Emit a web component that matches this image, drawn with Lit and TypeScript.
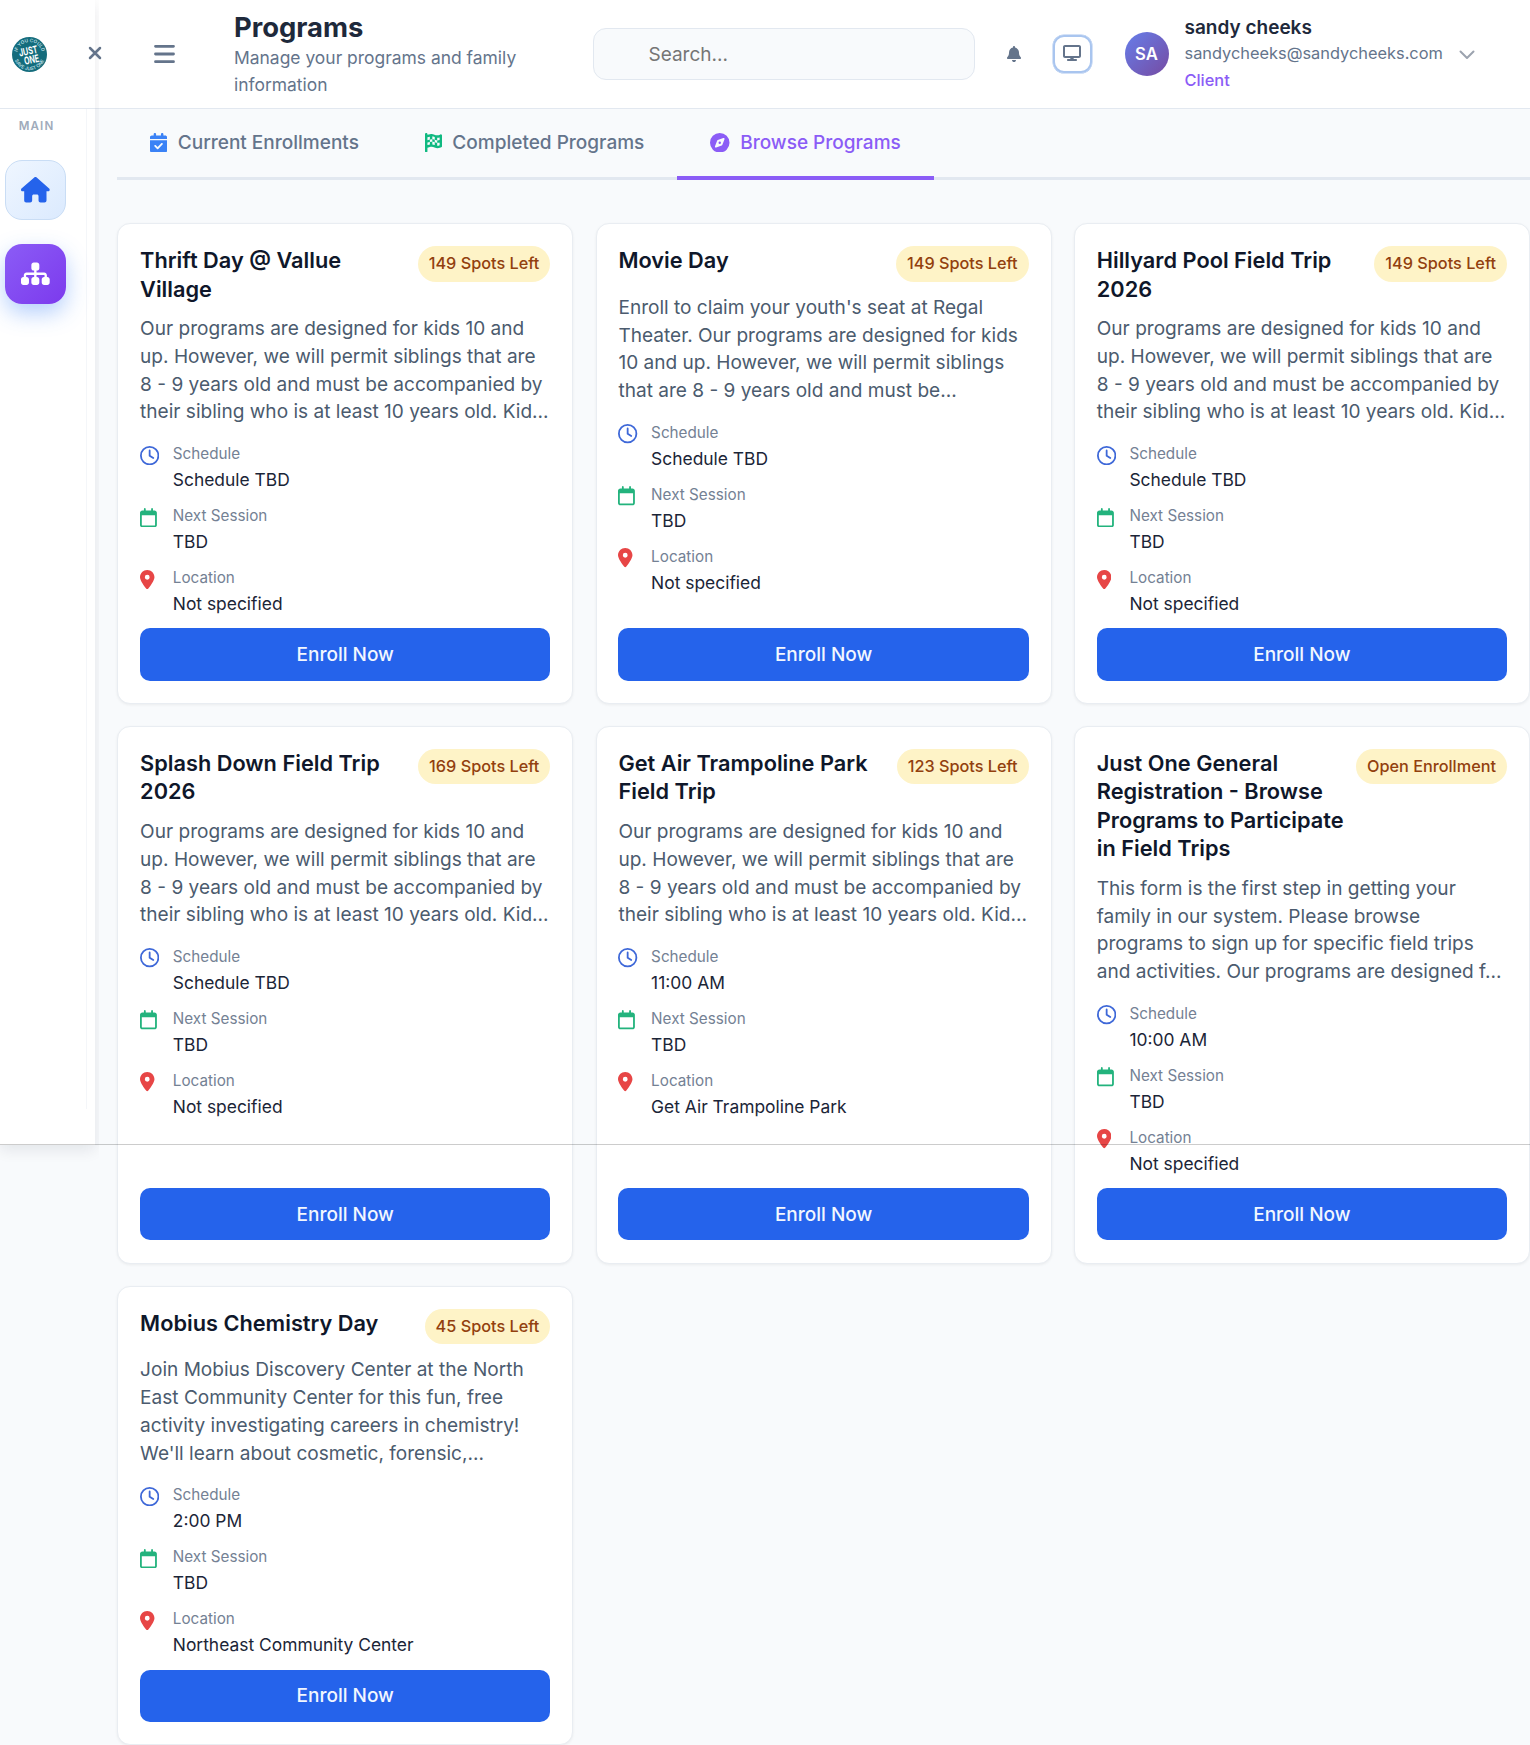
import { LitElement, html, css, svg, nothing } from "lit";
import { customElement, property } from "lit/decorators.js";

interface Glyph { w: number; d: string }

const GLYPHS: Record<string, Glyph> = {
  house: { w: 576, d: "M575.8 255.5c0 18-15 32.1-32 32.1h-32l.7 160.2c0 2.7-.2 5.4-.5 8.1V472c0 22.1-17.9 40-40 40H456c-1.1 0-2.2 0-3.3-.1c-1.4 .1-2.8 .1-4.2 .1H416 392c-22.1 0-40-17.9-40-40V448 384c0-17.7-14.3-32-32-32H256c-17.7 0-32 14.3-32 32v64 24c0 22.1-17.9 40-40 40H160 128.1c-1.5 0-3-.1-4.5-.2c-1.2 .1-2.4 .2-3.6 .2H104c-22.1 0-40-17.9-40-40V360c0-.9 0-1.9 .1-2.8V287.6H32c-18 0-32-14-32-32.1c0-9 3-17 10-24L266.4 8c7-7 15-8 22-8s15 2 21 7L564.8 231.5c8 7 12 15 11 24z" },
  sitemap: { w: 576, d: "M208 80c0-26.5 21.5-48 48-48h64c26.5 0 48 21.5 48 48v64c0 26.5-21.5 48-48 48h-8v40H464c30.9 0 56 25.1 56 56v32h8c26.5 0 48 21.5 48 48v64c0 26.5-21.5 48-48 48H464c-26.5 0-48-21.5-48-48V368c0-26.5 21.5-48 48-48h8V288c0-4.4-3.6-8-8-8H312v40h8c26.5 0 48 21.5 48 48v64c0 26.5-21.5 48-48 48H256c-26.5 0-48-21.5-48-48V368c0-26.5 21.5-48 48-48h8V280H112c-4.4 0-8 3.6-8 8v32h8c26.5 0 48 21.5 48 48v64c0 26.5-21.5 48-48 48H48c-26.5 0-48-21.5-48-48V368c0-26.5 21.5-48 48-48h8V288c0-30.9 25.1-56 56-56H264V192h-8c-26.5 0-48-21.5-48-48V80z" },
  check: { w: 448, d: "M128 0c17.7 0 32 14.3 32 32V64H288V32c0-17.7 14.3-32 32-32s32 14.3 32 32V64h48c26.5 0 48 21.5 48 48v48H0V112C0 85.5 21.5 64 48 64H96V32c0-17.7 14.3-32 32-32zM0 192H448V464c0 26.5-21.5 48-48 48H48c-26.5 0-48-21.5-48-48V192zM329 305c9.4-9.4 9.4-24.6 0-33.9s-24.6-9.4-33.9 0l-95 95-47-47c-9.4-9.4-24.6-9.4-33.9 0s-9.4 24.6 0 33.9l64 64c9.4 9.4 24.6 9.4 33.9 0L329 305z" },
  flag: { w: 448, d: "M32 0C49.700 0 64 14.300 64 32V48l69-17.200c38.100-9.500 78.300-5.100 113.500 12.500 46.300 23.200 100.800 23.200 147.100 0l9.600-4.800C423.800 28.100 448 43.100 448 66.100V345.800c0 13.300-8.300 25.300-20.800 30l-34.700 13c-46.200 17.300-97.600 14.600-141.700-7.400-37.900-19-81.400-23.700-122.500-13.400L64 384v96c0 17.700-14.300 32-32 32S0 497.700 0 480V32C0 14.300 14.300 0 32 0zM64 187.100l64-13.900v65.500L64 252.600V318l48.800-12.200c5.100-1.300 10.100-2.400 15.200-3.300v-63.900l38.900-8.400c8.300-1.800 16.700-2.500 25.100-2.100v-64c13.600.4 27.200 2.600 40.400 6.400l23.600 6.900v66.700l-41.700-12.300c-7.300-2.100-14.800-3.400-22.300-3.800v71.400c21.800 1.900 43.300 6.700 64 14.400V244.200l22.700 6.700c13.500 4 27.300 6.400 41.300 7.400V194c-7.800-.8-15.600-2.300-23.200-4.500L256 177.400V106.900c-14-3.500-27.500-8.500-40.400-15-7.600-3.800-15.500-6.600-23.600-8.600v81.100c-12.900-.3-25.800.9-38.500 3.700L128 173.600V98L64 113.900v73.200zM320 335.700c16.800 1.500 33.900-.7 50-6.800l14-5.200V251.900l-7.900 1.800c-18.400 4.300-37.300 5.700-56.100 4.500v77.400zM384 181.400V116.600c-20.900 6.100-42.400 9.100-64 9.100V194c13.900 1.400 28 .5 41.700-2.600l22.300-5.200z" },
  compass: { w: 512, d: "M256 512A256 256 0 1 0 256 0a256 256 0 1 0 0 512zm50.7-186.9L162.4 380.6c-19.4 7.5-38.5-11.6-31-31l55.5-144.3c3.3-8.5 9.9-15.1 18.4-18.4l144.3-55.5c19.4-7.5 38.5 11.6 31 31L325.1 306.7c-3.2 8.5-9.9 15.1-18.4 18.4zM288 256a32 32 0 1 0-64 0 32 32 0 1 0 64 0z" },
  pin: { w: 384, d: "M215.7 499.2C267 435 384 279.4 384 192C384 86 298 0 192 0S0 86 0 192c0 87.4 117 243 168.3 307.2c12.3 15.3 35.1 15.3 47.4 0zM192 128a64 64 0 1 1 0 128 64 64 0 1 1 0-128z" },
  clock: { w: 512, d: "M464 256A208 208 0 1 1 48 256a208 208 0 1 1 416 0zM0 256a256 256 0 1 0 512 0A256 256 0 1 0 0 256zM232 120V256c0 8 4 15.5 10.7 20l96 64c11 7.4 25.9 4.4 33.3-6.7s4.4-25.9-6.7-33.3L280 243.2V120c0-13.3-10.7-24-24-24s-24 10.7-24 24z" },
  calendar: { w: 448, d: "M152 24c0-13.3-10.7-24-24-24s-24 10.7-24 24V64H64C28.7 64 0 92.7 0 128v16 48V448c0 35.3 28.7 64 64 64H384c35.3 0 64-28.7 64-64V192 144 128c0-35.3-28.7-64-64-64H344V24c0-13.3-10.7-24-24-24s-24 10.7-24 24V64H152V24zM48 192H400V448c0 8.8-7.2 16-16 16H64c-8.8 0-16-7.2-16-16V192z" },
  bell: { w: 448, d: "M224 0c-17.7 0-32 14.3-32 32V51.2C119 66 64 130.6 64 208v18.8c0 47-17.3 92.4-48.5 127.6l-7.4 8.3c-8.4 9.4-10.4 22.9-5.3 34.4S19.4 416 32 416H416c12.6 0 24-7.4 29.2-18.9s3.1-25-5.3-34.4l-7.4-8.3C401.3 319.2 384 273.9 384 226.8V208c0-77.4-55-142-128-156.8V32c0-17.7-14.3-32-32-32zm45.3 493.3c12-12 18.7-28.3 18.7-45.3H224 160c0 17 6.7 33.3 18.7 45.3s28.3 18.7 45.3 18.7s33.3-6.7 45.3-18.7z" },
  desktop: { w: 576, d: "M64 0C28.700 0 0 28.700 0 64V352c0 35.300 28.700 64 64 64H240l-10.700 32H160c-17.700 0-32 14.300-32 32s14.300 32 32 32H416c17.700 0 32-14.300 32-32s-14.300-32-32-32H346.700L336 416H512c35.300 0 64-28.700 64-64V64c0-35.300-28.700-64-64-64H64zM512 64V352H64V64H512z" },
};

function glyph(name: string, height: number) {
  const g = GLYPHS[name];
  return html`<svg class="glyph" height=${height} width=${(height * g.w) / 512} viewBox="0 0 ${g.w} 512" fill="currentColor" fill-rule="${name === "flag" ? "evenodd" : "nonzero"}">${svg`<path d=${g.d}></path>`}</svg>`;
}

interface Program {
  title: string; badge: string; text: string; schedule: string; location: string;
}

const COMMON =
  "Our programs are designed for kids 10 and up. However, we will permit siblings that are 8 - 9 years old and must be accompanied by their sibling who is at least 10 years old. Kid...";

const PROGRAMS: Program[] = [
  { title: "Thrift Day @ Vallue Village", badge: "149 Spots Left", text: COMMON, schedule: "Schedule TBD", location: "Not specified" },
  { title: "Movie Day", badge: "149 Spots Left", text: "Enroll to claim your youth's seat at Regal Theater. Our programs are designed for kids 10 and up. However, we will permit siblings that are 8 - 9 years old and must be...", schedule: "Schedule TBD", location: "Not specified" },
  { title: "Hillyard Pool Field Trip 2026", badge: "149 Spots Left", text: COMMON, schedule: "Schedule TBD", location: "Not specified" },
  { title: "Splash Down Field Trip 2026", badge: "169 Spots Left", text: COMMON, schedule: "Schedule TBD", location: "Not specified" },
  { title: "Get Air Trampoline Park Field Trip", badge: "123 Spots Left", text: COMMON, schedule: "11:00 AM", location: "Get Air Trampoline Park" },
  { title: "Just One General Registration - Browse Programs to Participate in Field Trips", badge: "Open Enrollment", text: "This form is the first step in getting your family in our system. Please browse programs to sign up for specific field trips and activities. Our programs are designed f...", schedule: "10:00 AM", location: "Not specified" },
  { title: "Mobius Chemistry Day", badge: "45 Spots Left", text: "Join Mobius Discovery Center at the North East Community Center for this fun, free activity investigating careers in chemistry! We'll learn about cosmetic, forensic,...", schedule: "2:00 PM", location: "Northeast Community Center" },
];

@customElement("program-card")
export class ProgramCard extends LitElement {
  @property({ attribute: false }) program!: Program;

  static styles = css`
    :host { display: flex; flex-direction: column; box-sizing: border-box; min-width: 0; padding: 21.8px 22px 22.2px 21.8px; background: #fff; border: 1px solid #e9edf2; border-radius: 13px; box-shadow: 0 1px 3px rgba(0, 0, 0, 0.06); }
    .head { display: flex; justify-content: space-between; align-items: flex-start; gap: 10px; margin-bottom: 12.3px; }
    .title { margin: 0; font-size: 21.75px; line-height: 28.4px; font-weight: 600; color: #0f172a; min-width: 0; }
    .badge { flex: none; box-sizing: border-box; height: 35.5px; line-height: 35.5px; padding: 0 11px; border-radius: 18px; background: #fef3c7; color: #92400e; font-size: 16.25px; font-weight: 500; white-space: nowrap; }
    .text { margin: 0 0 15px; font-size: 19.07px; line-height: 27.7px; color: #4b5b6e; }
    .row { display: flex; align-items: flex-start; gap: 0; margin-bottom: 10px; }
    .icon { width: 32.7px; flex: none; padding-top: 4.5px; display: flex; }
    .clock { color: #3e68d8; }
    .calendar { color: #23b37d; }
    .pin { color: #e74646; }
    .label { font-size: 15.25px; line-height: 25px; color: #748194; }
    .value { font-size: 17.42px; line-height: 27px; color: #1b2537; }
    .enroll { margin-top: auto; height: 52.3px; border: 0; border-radius: 10px; background: #2563eb; color: #f2f7ff; font: 500 19px Inter, sans-serif; padding: 0; }
    .gap { height: 1.3px; flex: none; }
  `;

  private row(icon: string, label: string, value: string) {
    return html`<div class="row">
      <span class="icon ${icon}">${glyph(icon, 19.3)}</span>
      <div><div class="label">${label}</div><div class="value">${value}</div></div>
    </div>`;
  }

  render() {
    const p = this.program;
    if (!p) return nothing;
    return html`
      <div class="head"><h3 class="title">${p.title}</h3><span class="badge">${p.badge}</span></div>
      <p class="text">${p.text}</p>
      ${this.row("clock", "Schedule", p.schedule)}
      ${this.row("calendar", "Next Session", "TBD")}
      ${this.row("pin", "Location", p.location)}
      <div class="gap"></div>
      <button class="enroll">Enroll Now</button>
    `;
  }
}

@customElement("app-root")
export class AppRoot extends LitElement {
  static styles = css`
    :host { display: block; position: relative; width: 1530px; height: 1745px; overflow: hidden; background: #f8fafc; font-family: Inter, sans-serif; }
    * { box-sizing: border-box; }
    .layout { display: flex; align-items: flex-start; }
    .side { position: relative; z-index: 2; width: 95px; flex: none; height: 1144.5px; background: #fff; box-shadow: 0 5px 14px rgba(15, 23, 42, 0.09); clip-path: inset(0 -4px -24px 0); }
    .brand { height: 108.5px; border-bottom: 1px solid #e2e8f0; display: flex; align-items: center; padding-left: 12px; }
    .logo { display: block; margin-top: 2px; }
    .close { position: absolute; left: 88px; top: 46px; color: #64748b; z-index: 3; }
    .nav { width: 87px; height: 1000px; border-right: 1px solid #f4f6f9; padding: 9px 0 0 5px; }
    .section { width: 63px; text-align: center; font-size: 11.6px; line-height: 17px; font-weight: 600; letter-spacing: 1.15px; color: #a0abbb; margin-bottom: 25.5px; }
    .item { width: 60.5px; height: 60px; border-radius: 17px; display: flex; align-items: center; justify-content: center; margin-bottom: 24.2px; }
    .home { background: linear-gradient(135deg, #eff6ff, #dbeafe); border: 1px solid #c9ddf5; color: #2563eb; }
    .programs { background: linear-gradient(135deg, #8b5cf6, #7c3aed); color: #fff; box-shadow: 0 9px 22px rgba(59, 130, 246, 0.38); }
    .main { flex: 1; min-width: 0; }
    .top { height: 108.5px; background: #fff; border-bottom: 1px solid #e2e8f0; display: flex; align-items: center; padding-left: 59px; }
    .burger { width: 21px; margin-right: 59px; display: block; flex: none; }
    .heading { width: 358.5px; flex: none; }
    .h1 { margin: 0; font-size: 27.4px; line-height: 34px; font-weight: 700; color: #1e293b; }
    .sub { margin: 0; width: 320px; font-size: 17.45px; line-height: 26.7px; color: #64748b; position: relative; top: 1px; }
    .search { width: 382px; height: 52px; flex: none; border: 1px solid #e2e8f0; border-radius: 13px; background: #f8fafc; font: 400 19px Inter, sans-serif; color: #757575; display: flex; align-items: center; padding: 1px 0 0 55px; }
    .bell { width: 40px; margin-left: 19px; display: flex; justify-content: center; color: #64748b; flex: none; }
    .screen { width: 39px; height: 38px; margin-left: 19px; border: 2.5px solid #a9c5ef; border-radius: 11px; box-shadow: 0 0 0 0.5px #a9c5ef; color: #64748b; display: flex; align-items: center; justify-content: center; flex: none; padding-bottom: 1px; }
    .avatar { width: 44px; height: 44px; margin: 1px 0 0 33px; border-radius: 50%; background: linear-gradient(135deg, #667eea, #764ba2); color: #fff; font-size: 16.7px; font-weight: 600; display: flex; align-items: center; justify-content: center; flex: none; }
    .user { margin-left: 16px; width: 274.5px; flex: none; }
    .name { font-size: 19px; line-height: 26.7px; font-weight: 600; color: #1e293b; position: relative; top: 1px; }
    .mail { font-size: 16.38px; line-height: 26.7px; color: #64748b; }
    .role { font-size: 16.38px; line-height: 26.7px; color: #8b5cf6; font-weight: 500; }
    .chevron { margin-top: 3px; }
    .content { padding-left: 22.3px; }
    .tabs { display: flex; height: 71.5px; box-shadow: inset 0 -3px 0 #e2e8f0; margin-bottom: 43.3px; }
    .tab { display: flex; align-items: center; gap: 10.4px; padding: 0 33px 4px; font-size: 19.02px; font-weight: 500; color: #64748b; white-space: nowrap; }
    .active { border-bottom: 4px solid #8b5cf6; padding-bottom: 0; color: #8b5cf6; }
    .blue { color: #3b82f6; display: flex; }
    .green { color: #10b981; display: flex; }
    .purple { display: flex; }
    .grid { display: grid; grid-template-columns: repeat(3, minmax(0, 1fr)); gap: 22.4px 22.3px; }
    .fold { position: absolute; left: 0; right: 0; top: 1144px; height: 1px; background: rgba(0, 0, 0, 0.2); z-index: 3; }
  `;

  render() {
    return html`
      <div class="layout">
        <aside class="side">
          <div class="brand">
            <svg class="logo" width="35" height="35" viewBox="0 0 70 70">
              <defs>
                <path id="upper" d="M10 35a25 25 0 0 1 50 0"></path>
                <path id="lower" d="M3.500 35a31.500 31.500 0 0 0 63 0"></path>
              </defs>
              <circle cx="35" cy="35" r="35" fill="#146c7c"></circle>
              <g fill="#b9dde2" font-family="Inter, sans-serif" font-weight="600" font-size="9.500">
                <text><textPath href="#upper" startOffset="50%" text-anchor="middle">IF YOU COULD</textPath></text>
                <text><textPath href="#lower" startOffset="50%" text-anchor="middle">SAVE JUST ONE</textPath></text>
              </g>
              <g fill="#fff" font-family="Inter, sans-serif" font-weight="700" text-anchor="middle" transform="rotate(-12 35 35)">
                <text x="34" y="35" font-size="21" textLength="38" lengthAdjust="spacingAndGlyphs">JUST</text>
                <text x="37" y="53" font-size="21" textLength="30" lengthAdjust="spacingAndGlyphs">ONE</text>
              </g>
            </svg>
          </div>
          <nav class="nav">
            <div class="section">MAIN</div>
            <div class="item home">${glyph("house", 25.5)}</div>
            <div class="item programs">${glyph("sitemap", 25.5)}</div>
          </nav>
        </aside>
        <div class="main">
          <header class="top">
            <svg class="burger" width="21" height="20" viewBox="0 0 21 20" stroke="#64748b" stroke-width="2.800" stroke-linecap="round"><path d="M1.500 2.300h18M1.500 10h18M1.500 17.700h18"></path></svg>
            <div class="heading">
              <h1 class="h1">Programs</h1>
              <p class="sub">Manage your programs and family information</p>
            </div>
            <div class="search">Search...</div>
            <span class="bell">${glyph("bell", 16)}</span>
            <span class="screen">${glyph("desktop", 16)}</span>
            <span class="avatar">SA</span>
            <div class="user">
              <div class="name">sandy cheeks</div>
              <div class="mail">sandycheeks@sandycheeks.com</div>
              <div class="role">Client</div>
            </div>
            <svg class="chevron" width="16" height="10" viewBox="0 0 16 10" fill="none" stroke="#9ca3af" stroke-width="2" stroke-linecap="round" stroke-linejoin="round"><path d="M1.500 1.500L8 8l6.500-6.500"></path></svg>
          </header>
          <div class="content">
            <div class="tabs">
              <div class="tab"><span class="blue">${glyph("check", 19.5)}</span>Current Enrollments</div>
              <div class="tab"><span class="green">${glyph("flag", 19.5)}</span>Completed Programs</div>
              <div class="tab active"><span class="purple">${glyph("compass", 19.5)}</span>Browse Programs</div>
            </div>
            <div class="grid">
              ${PROGRAMS.map((p) => html`<program-card .program=${p}></program-card>`)}
            </div>
          </div>
        </div>
      </div>
      <svg class="close" width="14" height="14" viewBox="0 0 14 14" stroke="currentColor" stroke-width="2.500" stroke-linecap="round"><path d="M2 2l10 10M12 2L2 12"></path></svg>
      <div class="fold"></div>
    `;
  }
}
